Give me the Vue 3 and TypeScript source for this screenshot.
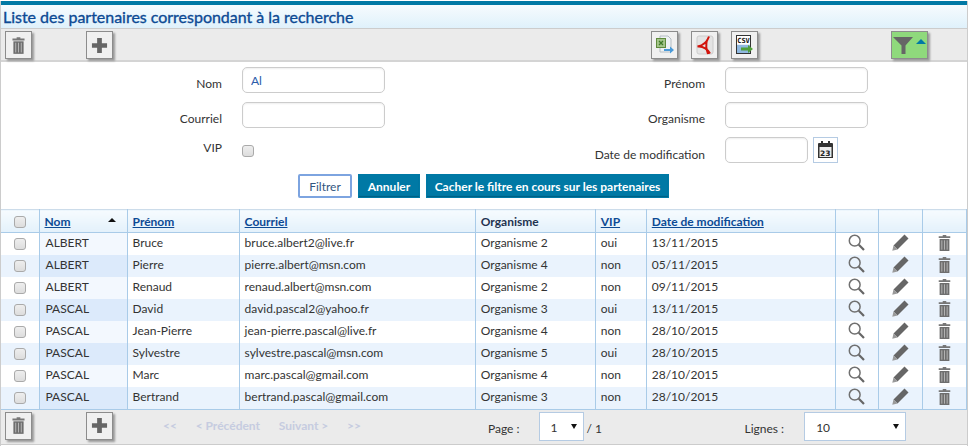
<template>
  <div class="page">
    <svg class="defs" aria-hidden="true">
      <symbol id="trash" viewBox="0 0 14 18">
        <path d="M5 0h4v1.500h4.500v2H.5v-2H5z" fill="#777" />
        <path d="M1.500 4.500h11V18h-11z" fill="#6e6e6e" />
        <path d="M4 6v10.500M7 6v10.500M10 6v10.500" stroke="#bbb" stroke-width="1" fill="none" />
      </symbol>
      <symbol id="plus" viewBox="0 0 18 18">
        <path d="M6.500 1h5v5.500H17v5h-5.500V17h-5v-5.500H1v-5h5.500z" fill="#666" />
      </symbol>
      <symbol id="loupe" viewBox="0 0 17 17">
        <circle cx="6.700" cy="6.700" r="5.400" fill="none" stroke="#707070" stroke-width="1.500" />
        <path d="M10.800 10.800l5.200 5.200" stroke="#666" stroke-width="2.200" fill="none" />
      </symbol>
      <symbol id="pencil" viewBox="0 0 17 17">
        <path d="M12.500.5l4 4L5.500 15.500l-4-4z" fill="#666" />
        <path d="M1.500 11.500l4 4L.3 16.700z" fill="#999" />
      </symbol>
    </svg>

    <h1 class="title">Liste des partenaires correspondant à la recherche</h1>

    <div class="toolbar">
      <button class="tool"><svg class="ico-trash"><use href="#trash" /></svg></button>
      <button class="tool tool-add"><svg class="ico-plus"><use href="#plus" /></svg></button>
      <div class="exports">
        <button class="tool">
          <svg width="20" height="20" viewBox="0 0 20 20">
            <path d="M5 1h8l3 3v13H5z" fill="#eef2f4" stroke="#b4bcc2" />
            <rect x="1.500" y="3.500" width="9" height="9" fill="#a4c58a" stroke="#5f8a3c" />
            <path d="M4 6l4 4M8 6l-4 4" stroke="#3f7a28" stroke-width="1.300" />
            <path d="M9 14h6v-2.500l4 3.500-4 3.500V16H9z" fill="#4a9ad8" />
          </svg>
        </button>
        <button class="tool">
          <svg width="20" height="20" viewBox="0 0 20 20">
            <rect x="2" y="1" width="16" height="18" rx="2" fill="#e4e4e4" stroke="#ccc" />
            <path d="M14 1.500C12.500 6 10 10 2.500 11.500c5-.5 9 1 12.500 7M12 5c-1.500 5-.5 10 1 14" fill="none" stroke="#d2140c" stroke-width="2" />
          </svg>
        </button>
        <button class="tool">
          <svg width="20" height="20" viewBox="0 0 20 20">
            <rect x="1.500" y=".5" width="14" height="18" fill="#e8eef6" stroke="#333" />
            <rect x="2" y="1" width="13" height="8" fill="#fff" />
            <text x="2.200" y="8" class="csv">CSV</text>
            <rect x="2" y="10" width="13" height="8" fill="#8fb8e0" />
            <path d="M6 12.500h7V10l5 4-5 4v-2.500H6z" fill="#4fa03a" />
          </svg>
        </button>
      </div>
      <button class="tool tool-filter">
        <svg width="20" height="19" viewBox="0 0 20 19"><path d="M0 1h20l-7.500 8.500V18H8.500V9.500z" fill="#666" /></svg>
        <span class="caret"></span>
      </button>
    </div>

    <form class="filters" @submit.prevent>
      <div class="fields">
        <label>Nom</label>
        <input class="field field-on" value="Al" />
        <label>Prénom</label>
        <input class="field" />
        <label>Courriel</label>
        <input class="field" />
        <label>Organisme</label>
        <input class="field" />
        <label class="lbl-vip">VIP</label>
        <div class="vip-cell"><span class="check"></span></div>
        <label class="lbl-date">Date de modification</label>
        <div class="date-cell">
          <input class="field field-date" />
          <span class="cal">
            <svg width="15" height="18" viewBox="0 0 15 18">
              <path d="M1 2h13a1 1 0 0 1 1 1v14H0V3a1 1 0 0 1 1-1z" fill="#333" />
              <path d="M3 0h2v3H3zM10 0h2v3h-2z" fill="#333" />
              <rect x="1.500" y="6" width="12" height="10" fill="#eee" />
              <text x="2" y="14.500" class="cal-day">23</text>
            </svg>
          </span>
        </div>
      </div>
      <div class="actions">
        <button class="btn btn-light">Filtrer</button>
        <button class="btn btn-cancel">Annuler</button>
        <button class="btn btn-hide">Cacher le filtre en cours sur les partenaires</button>
      </div>
    </form>

    <table class="grid">
      <colgroup>
        <col v-for="w in colWidths" :key="w.id" :style="{ width: w.px + 'px' }" />
      </colgroup>
      <thead>
        <tr>
          <th class="c"><span class="check"></span></th>
          <th class="th-sort"><a>Nom</a><i class="sort"></i></th>
          <th><a>Prénom</a></th>
          <th><a>Courriel</a></th>
          <th class="plain">Organisme</th>
          <th><a>VIP</a></th>
          <th><a>Date de modification</a></th>
          <th></th>
          <th></th>
          <th></th>
        </tr>
      </thead>
      <tbody>
        <tr v-for="p in partners" :key="p.mail">
          <td class="c"><span class="check"></span></td>
          <td class="sorted">{{ p.nom }}</td>
          <td>{{ p.prenom }}</td>
          <td>{{ p.mail }}</td>
          <td>{{ p.org }}</td>
          <td>{{ p.vip }}</td>
          <td>{{ p.date }}</td>
          <td class="c"><svg class="ico-row"><use href="#loupe" /></svg></td>
          <td class="c"><svg class="ico-row"><use href="#pencil" /></svg></td>
          <td class="c"><svg class="ico-bin"><use href="#trash" /></svg></td>
        </tr>
      </tbody>
    </table>

    <div class="footer">
      <button class="tool"><svg class="ico-trash"><use href="#trash" /></svg></button>
      <button class="tool tool-add"><svg class="ico-plus"><use href="#plus" /></svg></button>
      <nav class="pager">
        <span>&lt;&lt;</span>
        <span>&lt; Précédent</span>
        <span>Suivant &gt;</span>
        <span>&gt;&gt;</span>
      </nav>
      <span class="lbl-page">Page :</span>
      <span class="select sel-page">1<i></i></span>
      <span class="of">/ 1</span>
      <span class="lbl-lines">Lignes :</span>
      <span class="select sel-lines">10<i></i></span>
    </div>
  </div>
</template>

<script setup lang="ts">
  interface Partner {
    nom: string
    prenom: string
    mail: string
    org: string
    vip: string
    date: string
  }

  const colWidths = [38, 88, 112, 236, 120, 51, 189, 43, 44, 44].map((px, id) => ({ id, px }))

  const partners: Partner[] = [
    { nom: "ALBERT", prenom: "Bruce", mail: "bruce.albert2@live.fr", org: "Organisme 2", vip: "oui", date: "13/11/2015" },
    { nom: "ALBERT", prenom: "Pierre", mail: "pierre.albert@msn.com", org: "Organisme 4", vip: "non", date: "05/11/2015" },
    { nom: "ALBERT", prenom: "Renaud", mail: "renaud.albert@msn.com", org: "Organisme 2", vip: "non", date: "09/11/2015" },
    { nom: "PASCAL", prenom: "David", mail: "david.pascal2@yahoo.fr", org: "Organisme 3", vip: "oui", date: "13/11/2015" },
    { nom: "PASCAL", prenom: "Jean-Pierre", mail: "jean-pierre.pascal@live.fr", org: "Organisme 4", vip: "non", date: "28/10/2015" },
    { nom: "PASCAL", prenom: "Sylvestre", mail: "sylvestre.pascal@msn.com", org: "Organisme 5", vip: "oui", date: "28/10/2015" },
    { nom: "PASCAL", prenom: "Marc", mail: "marc.pascal@gmail.com", org: "Organisme 4", vip: "non", date: "28/10/2015" },
    { nom: "PASCAL", prenom: "Bertrand", mail: "bertrand.pascal@gmail.com", org: "Organisme 3", vip: "non", date: "28/10/2015" },
  ]
</script>

<style scoped>
  .page {
    box-sizing: border-box;
    width: 968px;
    height: 445px;
    margin-top: 1px;
    border-left: 1px solid #ccc;
    border-right: 1px solid #ccc;
    font-family: Lato, "Liberation Sans", sans-serif;
    font-size: 12px;
    color: #333;
    background: #fff;
  }

  .defs {
    display: none;
  }

  .title {
    box-sizing: border-box;
    height: 28px;
    margin: 0;
    padding: 2px 0 0 2px;
    border-top: 4px solid #0079a5;
    border-bottom: 1px solid #ccc;
    background: linear-gradient(#f6fbfe, #dff1fb);
    color: #0d4a94;
    font-size: 16px;
    font-weight: 400;
    line-height: 20px;
    letter-spacing: -0.02px;
    -webkit-text-stroke: 0.35px #0d4a94;
  }

  .toolbar {
    display: flex;
    height: 33px;
    box-sizing: border-box;
    padding: 2px 0 0 4px;
    background: #ebebeb;
    border-bottom: 2px solid #d4d4d4;
  }

  .tool {
    display: flex;
    align-items: center;
    justify-content: center;
    box-sizing: border-box;
    width: 27px;
    height: 28px;
    padding: 0;
    border: 1px solid #8c8c8c;
    background: #f0f0f0;
    box-shadow: 2px 2px 2px #999;
  }

  .tool-add {
    margin-left: 54px;
  }

  .ico-trash {
    width: 13px;
    height: 17px;
  }

  .ico-plus {
    width: 17px;
    height: 17px;
  }

  .exports {
    display: flex;
    gap: 13px;
    margin-left: 538px;
  }

  .csv {
    font-family: "DejaVu Sans Mono", monospace;
    font-size: 7px;
    font-weight: 700;
    fill: #111;
  }

  .tool-filter {
    gap: 3px;
    width: 37px;
    margin-left: 133px;
    background: #8fd97c;
  }

  .caret {
    width: 0;
    height: 0;
    margin-bottom: 8px;
    border-left: 5px solid transparent;
    border-right: 5px solid transparent;
    border-bottom: 5px solid #0079a5;
  }

  .filters {
    height: 147px;
    padding-top: 5px;
    box-sizing: border-box;
  }

  .fields {
    display: grid;
    grid-template-columns: 221px 143px 300px 143px;
    grid-auto-rows: 26px;
    column-gap: 20px;
    row-gap: 9px;
    align-items: center;
  }

  .fields label {
    text-align: right;
    line-height: 18px;
    padding-top: 7px;
  }

  .fields .lbl-vip {
    padding-top: 0;
    padding-bottom: 4px;
  }

  .fields .lbl-date {
    padding-top: 9px;
  }

  .field {
    box-sizing: border-box;
    width: 100%;
    height: 26px;
    padding: 0 8px;
    border: 1px solid #ccc;
    border-radius: 5px;
    background: #fff;
    box-shadow: inset 0 1px 2px #eee;
    font-family: inherit;
    font-size: 12px;
    color: #2a5caa;
    outline: none;
  }

  .field-date {
    width: 83px;
  }

  .date-cell {
    display: flex;
    gap: 5px;
  }

  .vip-cell {
    display: flex;
    padding-top: 2px;
  }

  .cal {
    display: flex;
    align-items: center;
    justify-content: center;
    box-sizing: border-box;
    width: 25px;
    height: 26px;
    border: 1px solid #b5cbe3;
  }

  .cal-day {
    font-family: "DejaVu Sans", sans-serif;
    font-size: 7.500px;
    font-weight: 700;
    fill: #222;
  }

  .actions {
    display: flex;
    gap: 6px;
    margin: 11px 0 0 297px;
  }

  .btn {
    box-sizing: border-box;
    height: 24px;
    padding: 0;
    border: 1px solid #0079a5;
    font-family: inherit;
    font-size: 12px;
    font-weight: 700;
    white-space: nowrap;
    color: #fff;
    background: #0079a5;
    box-shadow: inset 0 -1px 1px #005f82;
  }

  .btn-light {
    width: 54px;
    border: 2px solid #7da4e0;
    border-radius: 2px;
    background: #fff;
    box-shadow: none;
    color: #33567f;
    font-weight: 400;
  }

  .btn-cancel {
    width: 62px;
  }

  .btn-hide {
    width: 243px;
  }

  .grid {
    table-layout: fixed;
    border-collapse: collapse;
    width: 966px;
  }

  .grid th,
  .grid td {
    padding: 0 0 0 5px;
    border-right: 1px solid #a9cbe8;
    text-align: left;
    white-space: nowrap;
    overflow: hidden;
  }

  .grid th {
    position: relative;
    height: 22px;
    background: linear-gradient(#f6fbfe, #e3f1fb);
    border-top: 1px solid #ccdcea;
    border-bottom: 1px solid #a9cbe8;
    font-size: 12px;
    font-weight: 700;
    color: #333;
  }

  .grid th a {
    color: #0d4a94;
    text-decoration: underline;
  }

  .grid td {
    box-sizing: border-box;
    height: 22px;
    padding-bottom: 2px;
  }

  .grid tbody tr:nth-child(even) td {
    background: #eaf3fd;
  }

  .grid tbody tr td.sorted {
    padding-left: 6px;
    background: #f3f8fe;
  }

  .grid tbody tr:nth-child(even) td.sorted {
    background: #dceafb;
  }

  .grid .c {
    padding: 0 0 2px;
    text-align: center;
  }

  .grid th.c {
    padding: 0;
  }

  .grid th.plain {
    color: #1f3350;
  }

  .sort {
    position: absolute;
    top: 8px;
    right: 11px;
    width: 0;
    height: 0;
    border-left: 4px solid transparent;
    border-right: 4px solid transparent;
    border-bottom: 4px solid #111;
  }

  .check {
    display: inline-block;
    box-sizing: border-box;
    width: 12px;
    height: 12px;
    border: 1px solid #aaa;
    border-radius: 3px;
    background: linear-gradient(#eee, #ddd);
    vertical-align: middle;
  }

  .ico-row {
    width: 17px;
    height: 17px;
    vertical-align: middle;
  }

  .ico-bin {
    width: 13px;
    height: 16px;
    vertical-align: middle;
  }

  .footer {
    display: flex;
    align-items: flex-start;
    box-sizing: border-box;
    height: 36px;
    padding: 2px 0 0 4px;
    background: #ebebeb;
    border-top: 1px solid #a9cbe8;
    border-bottom: 1px solid #ccc;
  }

  .pager {
    display: flex;
    width: 198px;
    margin: 6px 0 0 50px;
    justify-content: space-between;
    color: #c6cce0;
    font-weight: 700;
    font-size: 12px;
  }

  .lbl-page {
    margin: 9px 0 0 127px;
  }

  .select {
    position: relative;
    box-sizing: border-box;
    height: 29px;
    padding: 7px 0 0 11px;
    border: 1px solid #b5cbe3;
    background: #fff;
    color: #333;
  }

  .select i {
    position: absolute;
    top: 11px;
    right: 6px;
    width: 0;
    height: 0;
    border-left: 3px solid transparent;
    border-right: 3px solid transparent;
    border-top: 5px solid #111;
  }

  .sel-page {
    width: 45px;
    margin-left: 19px;
  }

  .of {
    width: 158px;
    margin: 9px 0 0 3px;
  }

  .sel-lines {
    width: 102px;
    margin-left: 20px;
  }

  .lbl-lines {
    margin-top: 9px;
  }
</style>
